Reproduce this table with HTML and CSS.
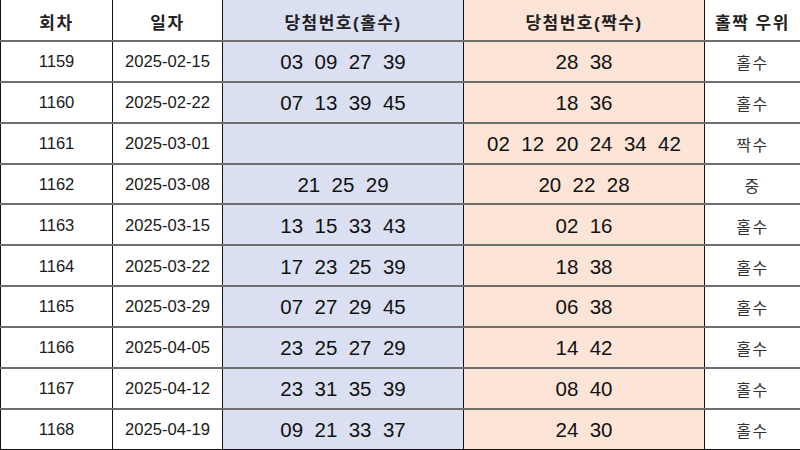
FILE: index.html
```html
<!DOCTYPE html>
<html lang="ko">
<head>
<meta charset="utf-8">
<link rel="stylesheet" href="styles.css">
</head>
<body>
<table class="lotto">
  <colgroup>
    <col class="c-round"><col class="c-date"><col class="c-odd"><col class="c-even"><col class="c-win">
  </colgroup>
  <thead>
    <tr><th>회차</th><th>일자</th><th class="odd">당첨번호(홀수)</th><th class="even">당첨번호(짝수)</th><th>홀짝 우위</th></tr>
  </thead>
  <tbody>
    <tr><td>1159</td><td>2025-02-15</td><td class="odd num">03  09  27  39</td><td class="even num">28  38</td><td class="win">홀수</td></tr>
    <tr><td>1160</td><td>2025-02-22</td><td class="odd num">07  13  39  45</td><td class="even num">18  36</td><td class="win">홀수</td></tr>
    <tr><td>1161</td><td>2025-03-01</td><td class="odd num"></td><td class="even num">02  12  20  24  34  42</td><td class="win">짝수</td></tr>
    <tr><td>1162</td><td>2025-03-08</td><td class="odd num">21  25  29</td><td class="even num">20  22  28</td><td class="win">중</td></tr>
    <tr><td>1163</td><td>2025-03-15</td><td class="odd num">13  15  33  43</td><td class="even num">02  16</td><td class="win">홀수</td></tr>
    <tr><td>1164</td><td>2025-03-22</td><td class="odd num">17  23  25  39</td><td class="even num">18  38</td><td class="win">홀수</td></tr>
    <tr><td>1165</td><td>2025-03-29</td><td class="odd num">07  27  29  45</td><td class="even num">06  38</td><td class="win">홀수</td></tr>
    <tr><td>1166</td><td>2025-04-05</td><td class="odd num">23  25  27  29</td><td class="even num">14  42</td><td class="win">홀수</td></tr>
    <tr><td>1167</td><td>2025-04-12</td><td class="odd num">23  31  35  39</td><td class="even num">08  40</td><td class="win">홀수</td></tr>
    <tr><td>1168</td><td>2025-04-19</td><td class="odd num">09  21  33  37</td><td class="even num">24  30</td><td class="win">홀수</td></tr>
  </tbody>
</table>
</body>
</html>
```
FILE: styles.css
```css
html, body {
  margin: 0;
  padding: 0;
  background: #ffffff;
}
.lotto {
  width: 800px;
  height: 450px;
  border-collapse: collapse;
  table-layout: fixed;
  font-family: "Liberation Sans", "Noto Sans CJK KR", sans-serif;
  color: #1a1a1a;
}
.c-round { width: 112px; }
.c-date { width: 110px; }
.c-odd { width: 241px; }
.c-even { width: 241px; }
.c-win { width: 96px; }
.lotto th, .lotto td {
  border-left: 1px solid #111;
  border-right: 1px solid #111;
  border-top: 2px solid #6e6e6e;
  border-bottom: 2px solid #6e6e6e;
  text-align: center;
  padding: 2px 0 0;
}
.lotto thead tr { height: 41px; }
.lotto tbody tr { height: 40.6px; }
.lotto thead th {
  border-top: none;
  font-family: "Liberation Sans", "Noto Sans CJK KR", sans-serif;
  font-weight: 700;
  font-size: 17px;
  letter-spacing: 1.5px;
  color: #222;
}
.lotto tbody tr:last-child td { border-bottom: 1px solid #111; }
.lotto td {
  font-size: 16.6px;
}
.lotto .odd { background: #dae0f2; }
.lotto .even { background: #fce4d6; }
.lotto .num {
  font-size: 20.5px;
  white-space: pre;
  color: #111;
}
.lotto .win {
  font-family: "Noto Sans CJK KR", sans-serif;
  font-size: 16px;
  letter-spacing: 1.5px;
  color: #333;
}
```
